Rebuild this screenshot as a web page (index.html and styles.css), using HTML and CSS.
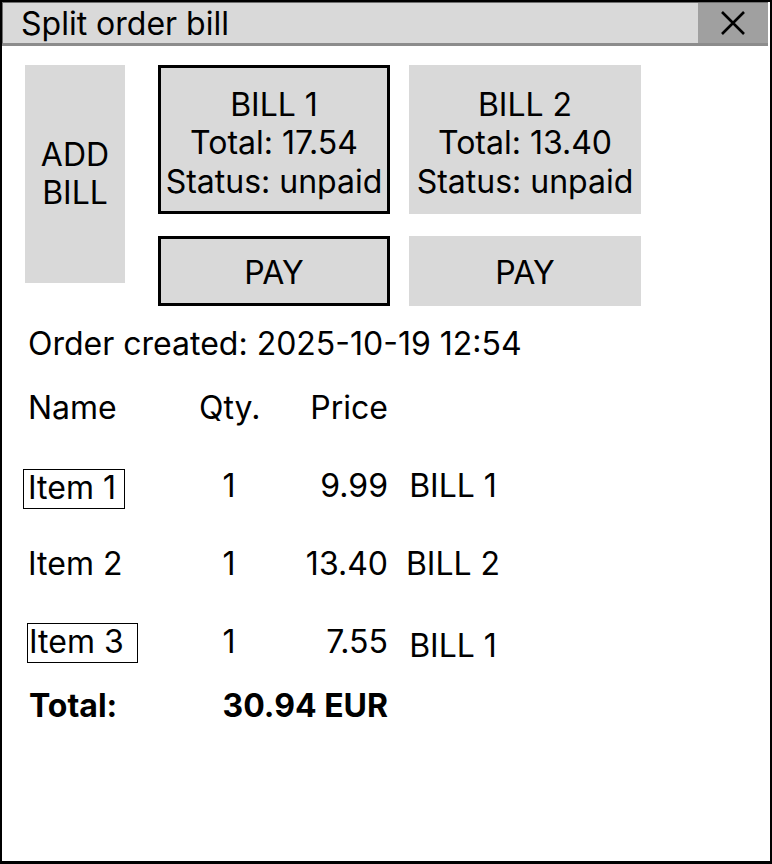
FILE: index.html
```html
<!DOCTYPE html>
<html>
<head>
<meta charset="utf-8">
<link rel="stylesheet" href="styles.css">
</head>
<body>
<div class="window">
  <div class="titlebar">
    <div class="title">Split order bill</div>
    <div class="close">
      <svg width="26" height="26" viewBox="0 0 26 26"><path d="M2 2 L24 24 M24 2 L2 24" stroke="#000" stroke-width="2.6" fill="none"/></svg>
    </div>
  </div>
  <div class="content">
    <div class="top">
      <div class="add-bill">ADD<br>BILL</div>
      <div class="bills">
        <div class="bill-card selected">BILL 1<br>Total: 17.54<br>Status: unpaid</div>
        <div class="bill-card">BILL 2<br>Total: 13.40<br>Status: unpaid</div>
        <div class="pay selected">PAY</div>
        <div class="pay">PAY</div>
      </div>
    </div>
    <div class="created">Order created: 2025-10-19 12:54</div>
    <div class="table">
      <div class="row">
        <div class="c-name">Name</div>
        <div class="c-qty">Qty.</div>
        <div class="c-price">Price</div>
        <div class="c-bill"></div>
      </div>
      <div class="row">
        <div class="c-name"><span class="item-box box-a">Item 1</span></div>
        <div class="c-qty">1</div>
        <div class="c-price">9.99</div>
        <div class="c-bill">BILL 1</div>
      </div>
      <div class="row">
        <div class="c-name">Item 2</div>
        <div class="c-qty">1</div>
        <div class="c-price">13.40</div>
        <div class="c-bill">BILL 2</div>
      </div>
      <div class="row">
        <div class="c-name"><span class="item-box box-b">Item 3</span></div>
        <div class="c-qty">1</div>
        <div class="c-price">7.55</div>
        <div class="c-bill lower">BILL 1</div>
      </div>
      <div class="row total">
        <div class="c-name total-label">Total:</div>
        <div class="c-sum">30.94 EUR</div>
      </div>
    </div>
  </div>
</div>
</body>
</html>
```
FILE: styles.css
```css
* { box-sizing: border-box; }
html, body { margin: 0; padding: 0; background: #fff; }
body {
  font-family: Inter, "Noto Sans", sans-serif;
  color: #000;
  font-size: 32px;
}
.window {
  width: 772px;
  height: 864px;
  border: 2px solid #000;
  border-bottom-width: 3px;
  background: #fff;
  overflow: hidden;
}
.titlebar {
  margin: -2px 0 0 -2px;
  width: 768px;
  height: 46px;
  display: flex;
  background: #d9d9d9;
  border-top: 3px solid #6f6f6f;
  border-left: 3px solid #6f6f6f;
  border-bottom: 3px solid #8c8c8c;
}
.title {
  flex: 1;
  padding: 2px 0 0 18px;
  line-height: 38px;
}
.close {
  width: 70px;
  background: #a0a0a0;
  display: flex;
  align-items: center;
  justify-content: center;
}
.content {
  padding: 19px 0 0 23px;
}
.top {
  display: flex;
  gap: 33px;
  align-items: flex-start;
}
.add-bill {
  width: 100px;
  height: 218px;
  background: #d9d9d9;
  display: flex;
  align-items: center;
  justify-content: center;
  text-align: center;
  line-height: 38px;
}
.bills {
  display: grid;
  grid-template-columns: 232px 232px;
  grid-template-rows: 149px 70px;
  column-gap: 19px;
  row-gap: 22px;
}
.bill-card {
  background: #d9d9d9;
  display: flex;
  align-items: center;
  justify-content: center;
  text-align: center;
  line-height: 38.5px;
  white-space: nowrap;
  padding-top: 8px;
}
.pay {
  background: #d9d9d9;
  display: flex;
  align-items: center;
  justify-content: center;
  padding-top: 2px;
}
.selected { border: 3px solid #000; }
.created {
  margin: 20px 0 0 3px;
  line-height: 36px;
}
.table {
  margin-top: 26px;
  margin-left: 3px;
}
.row {
  display: grid;
  grid-template-columns: 171px 60px 129px 10px 110px;
  height: 40px;
  line-height: 40px;
  margin-bottom: 38px;
}
.c-name { grid-column: 1; white-space: nowrap; }
.c-qty { grid-column: 2; text-align: center; }
.c-price { grid-column: 3; text-align: right; }
.c-bill { grid-column: 5; text-align: center; white-space: nowrap; }
.c-bill.lower { padding-top: 4px; }
.item-box {
  display: inline-block;
  border: 1px solid #000;
  line-height: 36px;
  height: 40px;
}
.box-a { margin-left: -5px; margin-top: 3px; padding: 0 8px 0 4px; }
.box-b { margin-left: -1px; margin-top: -1px; padding: 0 13px 0 1px; }
.row.total {
  margin-top: -14px;
  font-weight: 700;
}
.total-label { padding-left: 1px; }
.c-sum { grid-column: 2 / 4; text-align: right; white-space: nowrap; }
```
